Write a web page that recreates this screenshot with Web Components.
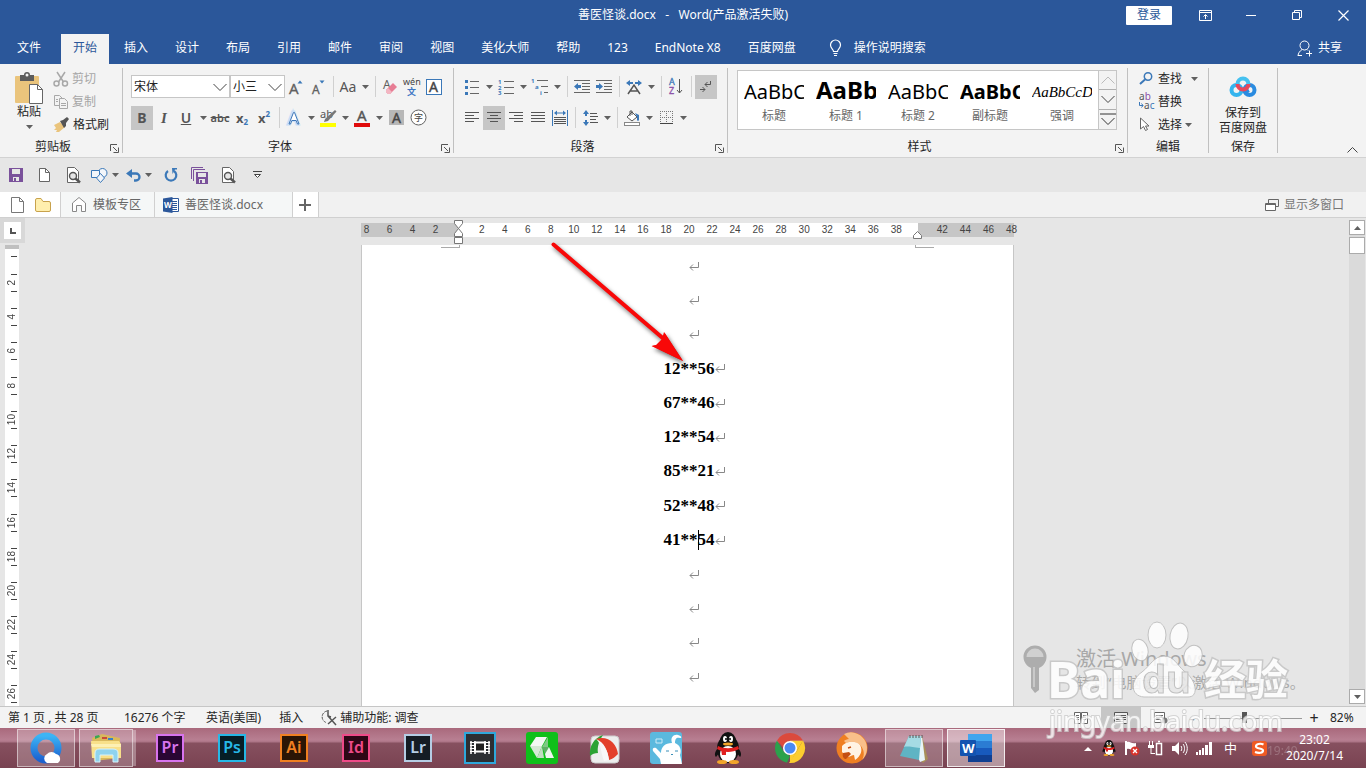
<!DOCTYPE html>
<html lang="zh-CN">
<head>
<meta charset="utf-8">
<title>善医怪谈.docx - Word</title>
<style>
  html, body {
    height: 100%;
    margin: 0;
  }

  body {
    font: 12px/16px "Noto Sans", "Noto Sans CJK SC", sans-serif;
    color: #262626;
    overflow: hidden;
  }
</style>
</head>
<body>
<word-app></word-app>

<script>
const BLUE = '#3b78b8';

// name: [width, height, markup]
const icons = {
  down: [7, 4, `<path d="M0 0h7L3.500 4z" fill="#606060"/>`],
  launcher: [9, 9, `<path d="M.5 7V.5H7M3 3l4 4M8.500 3.500v5h-5" fill="none" stroke="#555"/>`],
  chevron: [14, 8, `<path d="M.5 1 7 7.500 13.500 1" fill="none" stroke="#444"/>`],
  chevronUp: [14, 8, `<path d="M.5 7.500 7 1l6.500 6.500" fill="none" stroke="#bbb"/>`],
  chevronBar: [16, 13, `<path d="M0 1h16M1.500 5 8 11.500 14.500 5" fill="none" stroke="#333"/>`],
  collapse: [11, 6, `<path d="M.5 5.500l5-5 5 5" fill="none" stroke="#444"/>`],

  paste: [30, 32, `<rect x="1" y="4" width="24" height="27" rx="1" fill="#eac47c"/><path d="M6 3h4a3 3 0 0 1 6 0h4v6H6z" fill="#5c5c5c"/><circle cx="13" cy="3" r="1.500" fill="#f3f3f3"/><path d="M15.500 12.500h8l5 5v14h-13z" fill="#fff" stroke="#666"/><path d="M23.500 12.500v5h5" fill="none" stroke="#666"/>`],
  cut: [16, 16, `<g fill="none" stroke="#a8a8a8" stroke-width="1.500"><path d="M4 1l6.500 10M12 1 5.500 11"/><circle cx="3.500" cy="12.500" r="2.500"/><circle cx="12" cy="12.500" r="2.500"/></g>`],
  copy: [16, 16, `<g fill="#f3f3f3" stroke="#a8a8a8"><path d="M1.500 1.500h5l3 3v7h-8z"/><path d="M6.500 4.500h5l3 3v7h-8z"/><path d="M8 9.500h5M8 11.500h5M3 5.500h2M3 7.500h2" /></g>`],
  brush: [17, 15, `<path d="M1 8l6-3 5 5-6 5H3l1-2-3 0 2-2z" fill="#eac47c"/><path d="M7 4l3-1 4-3 2 2-3 4 0 3-2 2z" fill="#555"/>`],

  growFont: [16, 16, `<text x="1" y="15" font-size="15" fill="#606060" stroke="#606060" stroke-width=".3">A</text><path d="M9.500 4.500h5L12 1.500z" fill="${BLUE}"/>`],
  shrinkFont: [16, 16, `<text x="2" y="15" font-size="12" fill="#606060" stroke="#606060" stroke-width=".3">A</text><path d="M9.500 1.500h5L12 4.500z" fill="${BLUE}"/>`],
  clearFormat: [16, 16, `<text x="1" y="10" font-size="12" fill="#606060">A</text><path d="M4 11l7-7 4 4-7 7H6l-2-2z" fill="#e77d94"/><path d="M4 11l2-2 4 4-2 2H6l-2-2z" fill="#f3b6c2"/>`],
  pinyin: [18, 18, `<text x="0" y="7" font-size="9" fill="#444">wén</text><text x="4" y="17" font-size="9" font-weight="bold" fill="#3f76c4">文</text>`],
  charBorder: [16, 16, `<rect x=".5" y=".5" width="15" height="15" fill="#fff" stroke="${BLUE}"/><text x="3" y="13" font-size="14" fill="#444" stroke="#444" stroke-width=".4">A</text>`],
  textEffect: [16, 16, `<text x="2" y="14" font-size="16" fill="#b9d3f0" stroke="#c9def5" stroke-width="3">A</text><path d="M3 14 7.500 2.500h1L13 14h-1.500l-1.300-3.500H5.800L4.500 14z" fill="#fff" stroke="#3f76b8"/>`],
  highlight: [18, 18, `<text x="1" y="9" font-size="11" fill="#555">ab</text><path d="M16 1l1.500 1.500L9 12l-4 1 1-3z" fill="#777"/><rect x="1" y="14" width="16" height="4" fill="#ffff00"/>`],
  fontColor: [16, 18, `<text x="3" y="12" font-size="15" fill="#555" stroke="#555" stroke-width=".4">A</text><rect x="0" y="14" width="16" height="4" fill="#e00b0b"/>`],
  charShade: [15, 15, `<rect width="15" height="15" fill="#b7b7b7"/><text x="3" y="13" font-size="14" fill="#444" stroke="#444" stroke-width=".4">A</text>`],
  enclose: [17, 17, `<circle cx="8.500" cy="8.500" r="7.500" fill="#fff" stroke="#606060"/><text x="4" y="12" font-size="9" fill="#444">字</text>`],

  bullets: [14, 16, `<g fill="${BLUE}"><rect y="1" width="3" height="3"/><rect y="7" width="3" height="3"/><rect y="13" width="3" height="3"/></g><path d="M5 2.500h9M5 8.500h9M5 14.500h9" stroke="#666"/>`],
  numbers: [16, 16, `<g font-size="6" font-weight="bold" fill="${BLUE}"><text y="5">1</text><text y="11">2</text><text y="16">3</text></g><path d="M6 2.500h10M6 8.500h10M6 14.500h10" stroke="#666"/>`],
  multilevel: [18, 17, `<g font-size="6" font-weight="bold" fill="${BLUE}"><text y="5">1</text><text x="4" y="11">a</text><text x="9" y="17">i</text></g><path d="M6 2.500h11M10 8.500h7M13 14.500h4" stroke="#666"/>`],
  outdent: [16, 14, `<path d="M0 .5h16M8 3.500h8M8 6.500h8M8 9.500h8M0 12.500h16" stroke="#666"/><path d="M0 6.500 4 3v2h3v3H4v2z" fill="${BLUE}"/>`],
  indent: [16, 14, `<path d="M0 .5h16M8 3.500h8M8 6.500h8M8 9.500h8M0 12.500h16" stroke="#666"/><path d="M7 6.500 3 3v2H0v3h3v2z" fill="${BLUE}"/>`],
  asian: [16, 14, `<path d="M2 14 8 5l6 9M4.500 11h7" fill="none" stroke="#555" stroke-width="1.500"/><path d="M0 3l4-3v2h3v2H4v2zM16 3l-4-3v2H9v2h3v2z" fill="${BLUE}"/>`],
  sort: [14, 17, `<text x="0" y="7" font-size="9" fill="${BLUE}" stroke="${BLUE}" stroke-width=".3">A</text><text x="0" y="16" font-size="9" fill="#8b4fa8" stroke="#8b4fa8" stroke-width=".3">Z</text><path d="M10.500 1v14M8 12l2.500 3 2.500-3" fill="none" stroke="#555"/>`],
  marks: [14, 14, `<path d="M11.500 1v3.500H6M8.500 2 6 4.500 8.500 7M1 9.500h5M3.500 7 6 9.500 3.500 12" fill="none" stroke="#555"/>`],
  alignLeft: [14, 12, `<path d="M0 .5h14M0 3.500h9M0 6.500h14M0 9.500h9" stroke="#555"/>`],
  alignCenter: [14, 12, `<path d="M0 .5h14M3 3.500h8M0 6.500h14M3 9.500h8" stroke="#555"/>`],
  alignRight: [14, 12, `<path d="M0 .5h14M5 3.500h9M0 6.500h14M5 9.500h9" stroke="#555"/>`],
  justify: [14, 12, `<path d="M0 .5h14M0 3.500h14M0 6.500h14M0 9.500h14" stroke="#555"/>`],
  distribute: [16, 16, `<path d="M.5 0v16M15.500 0v16" stroke="${BLUE}"/><path d="M2 3l3-2.500v2h6v-2L14 3l-3 2.500v-2H5v2z" fill="${BLUE}"/><path d="M2 7.500h12M2 9.500h12M2 11.500h12M2 13.500h12" stroke="#555"/>`],
  lineSpacing: [15, 16, `<path d="M3 0 6 4H4v2H2V4H0zM3 16l3-4H4v-2H2v2H0z" fill="${BLUE}"/><path d="M7 3.500h7M7 6.500h8M7 9.500h6M7 12.500h8" stroke="#555"/>`],
  shading: [17, 16, `<path d="M3 7l5-5 5 5-5 4z" fill="#fff" stroke="#555"/><path d="M6 6V1h2v4" fill="none" stroke="#555"/><path d="M11 3l4 2v5c0 1-2 1-2 0V7z" fill="${BLUE}"/><rect x=".5" y="12.500" width="15" height="3" fill="#fff" stroke="#888"/>`],
  borders: [13, 13, `<path d="M.5 0v12M6.500 0v12M12.500 0v12M0 .5h13M0 6.500h13" stroke="#777" stroke-dasharray="1 1"/><path d="M0 12.500h13" stroke="#444"/>`],

  find: [14, 13, `<circle cx="9" cy="4.500" r="3.700" fill="none" stroke="${BLUE}" stroke-width="1.500"/><path d="M6 7.500 1 12" stroke="${BLUE}" stroke-width="2"/>`],
  replace: [16, 17, `<text y="7" font-size="10" fill="#555">a<tspan fill="#8b4fa8">b</tspan></text><text x="5" y="16" font-size="10" fill="#555">a<tspan fill="${BLUE}">c</tspan></text><path d="M.5 9v3.500H4M2.500 10.500l1.500 2-1.500 2" fill="none" stroke="${BLUE}"/>`],
  cursor: [11, 15, `<path d="M1.500 1v11l3-2.500 2 4 2-1-2-3.500H10z" fill="#fff" stroke="#666"/>`],
  netdisk: [28, 22, `<g fill="none" stroke-width="4"><circle cx="7.500" cy="15" r="5" stroke="#34b4ee"/><circle cx="20.500" cy="15" r="5" stroke="#2a8be0"/><path d="M16 12l3 6" stroke="#2a8be0"/><path d="M8.500 9a5.500 5.500 0 1 1 11 0" stroke="#45c1f0"/><path d="M8.500 9a5.500 5.500 0 0 0 11 0" stroke="#e8485c"/></g>`],

  bulb: [13, 18, `<path d="M4.500 12.500c0-2-3-3-3-6.500a5 5 0 0 1 10 0c0 3.500-3 4.500-3 6.500zM4.500 14.500h4M5 16.500h3" fill="none" stroke="#fff" stroke-width="1.200"/>`],
  share: [16, 17, `<g fill="none" stroke="#fff"><circle cx="7.500" cy="5.500" r="4.500"/><path d="M1 16c0-3 2-5 4-6.500M10 9.500l1 1M9 13.500h6M12.500 10.500v6M1 15.500h4"/></g>`],
  ribbonMode: [13, 11, `<path d="M.5.5h12v10H.5zM.5 2.500h12M6.500 9V5M4.500 6.500l2-2 2 2" fill="none" stroke="#fff"/>`],
  minimize: [10, 10, `<path d="M0 5.500h10" stroke="#fff"/>`],
  restore: [11, 11, `<path d="M.5 2.500h7v7h-7zM2.500 2V.5h7v7H8" fill="none" stroke="#fff"/>`],
  close: [11, 11, `<path d="M.5.5l10 10M10.500.5l-10 10" stroke="#fff" stroke-width="1.200"/>`],

  save: [14, 14, `<path d="M0 0h14v14H0z" fill="#7a519b"/><path d="M3 1h8v5H3z" fill="#e6e6e6"/><path d="M4 9h6v4H4z" fill="#e6e6e6"/><path d="M5 10h2v3H5z" fill="#7a519b"/>`],
  saveAll: [17, 17, `<path d="M.5 12V.5H12M2.500 14V2.500H14" fill="none" stroke="#7a519b"/><path d="M5 5h12v12H5z" fill="#7a519b"/><path d="M7 6h8v4H7zM8 12h6v4H8z" fill="#e6e6e6"/><path d="M9 13h2v3H9z" fill="#7a519b"/>`],
  newDoc: [11, 14, `<path d="M.5.5h6l4 4v9H.5z" fill="#fff" stroke="#666"/><path d="M6.500.5v4h4" fill="none" stroke="#666"/>`],
  preview: [15, 16, `<path d="M1.500.5h7l4 4v11h-11z" fill="#fff" stroke="#666"/><circle cx="7" cy="9" r="3.500" fill="#e6e6e6" stroke="#555" stroke-width="1.400"/><path d="M9.500 11.500 14 15.500" stroke="#555" stroke-width="2.500"/>`],
  shapes: [17, 15, `<g fill="#f3f6fa" stroke="${BLUE}"><circle cx="11.500" cy="5" r="4.500"/><path d="M.5 2.500h8v7h-8z"/><path d="M9.500 5.500l4 4.500-4 4.500L5.500 10z"/></g>`],
  undo: [15, 13, `<path d="M5 4.500h5a3.500 3.500 0 0 1 0 7H8" fill="none" stroke="${BLUE}" stroke-width="2.300"/><path d="M0 4.500 6 0v9z" fill="${BLUE}"/>`],
  redo: [14, 14, `<path d="M4 3a5.300 5.300 0 1 0 6 0" fill="none" stroke="${BLUE}" stroke-width="2.200"/><path d="M8 0h5v1.500h-2L8.500 6z" fill="${BLUE}"/>`],
  more: [9, 8, `<path d="M0 .5h9M1.500 3.500l3 3 3-3z" fill="#fff" stroke="#444"/>`],

  page: [13, 16, `<path d="M.5.5h8l4 4v11H.5z" fill="#fff" stroke="#777"/><path d="M8.500.5v4h4" fill="none" stroke="#777"/>`],
  folder: [16, 14, `<path d="M.5 2a1.500 1.500 0 0 1 1.500-1.500h4l2 3h6a1.500 1.500 0 0 1 1.500 1.500v7a1.500 1.500 0 0 1-1.500 1.500H2A1.500 1.500 0 0 1 .5 12z" fill="#ffefae" stroke="#c8a24c"/>`],
  home: [14, 15, `<path d="M.5 14.500V6L7 .5 13.500 6v8.500h-4v-6h-5v6z" fill="#fff" stroke="#888"/>`],
  wordDoc: [16, 16, `<path d="M8 1.500h7.500v13H8z" fill="#fff" stroke="#2b579a"/><path d="M9 4.500h5M9 6.500h5M9 8.500h5M9 10.500h5M9 12.500h5" stroke="#2b579a"/><path d="M0 1.500 9.500 0v16L0 14.500z" fill="#2b579a"/><text x="1" y="11" font-size="8" font-weight="bold" fill="#fff">W</text>`],
  plus: [12, 12, `<path d="M6 0v12M0 6h12" stroke="#666" stroke-width="2"/>`],
  windows: [14, 12, `<path d="M3.500 4V.5h10v7H11" fill="none" stroke="#666"/><path d="M.5 4.500h10v7H.5zM.5 5.500h10" fill="#fff" stroke="#666"/>`],
  tabStop: [6, 6, `<path d="M1 0v5h5" fill="none" stroke="#555" stroke-width="2"/>`],
  arrowUp: [7, 4, `<path d="M0 4h7L3.500 0z" fill="#606060"/>`],
  paraMark: [10, 9, `<path d="M9.500 0v5.500H1M4 2.500l-3 3 3 3" fill="none" stroke="#888"/>`],

  access: [16, 15, `<path d="M6 1a6 6 0 0 0-1 11.500" fill="none" stroke="#555" stroke-dasharray="3 1"/><path d="M7 0v6l3 1M7 6l8 9M15 7l-8 7" fill="none" stroke="#555" stroke-width="1.500"/>`],
  readMode: [14, 12, `<path d="M.5.500h6v11h-6zM7.500.5h6v11h-6z" fill="#fff" stroke="#666"/><path d="M2 3.500h3M2 5.500h3M2 7.500h3M9 3.500h3M9 5.500h3M9 7.500h3" stroke="#666"/>`],
  printMode: [14, 12, `<path d="M.5.5h13v11H.5z" fill="#eee" stroke="#555"/><path d="M2 3.500h10M2 5.500h10M2 7.500h10M2 9.500h7" stroke="#555"/>`],
  webMode: [14, 12, `<path d="M.5.5h10v10H.5z" fill="#fff" stroke="#666"/><path d="M2 3.500h7M2 5.500h6M2 7.500h5" stroke="#666"/><circle cx="10.500" cy="8.500" r="3" fill="#777"/>`],

  qqBrowser: [32, 32, `<defs><linearGradient id="g" x2="0" y2="1"><stop stop-color="#3cb4f5"/><stop offset="1" stop-color="#1c62d0"/></linearGradient></defs><circle cx="16" cy="16" r="12" fill="none" stroke="url(#g)" stroke-width="7"/><path d="M17 31a5 5 0 0 1 0-9 6 6 0 0 1 9 0 5 5 0 0 1 2 9z" fill="#fff"/>`],
  explorer: [32, 32, `<path d="M2 6l10-4 18 4v20L4 29z" fill="#d9b85c"/><path d="M5 4l4-1 1 2-5 2z" fill="#3aa655"/><path d="M12 5h5v2h-5z" fill="#c94a3c"/><path d="M18 6h5v2h-5z" fill="#3a82c9"/><path d="M1 9h28l2 3v14H2z" fill="#f8e08a"/><path d="M1 12h30v3H2z" fill="#fdf0b4"/><path d="M5 21c0-3 2-4 4-4h14c3 0 5 1 5 4v9h-5v-7H10v7H5z" fill="#8fd3ee" stroke="#d8f2fb"/>`],
  vegas: [32, 32, `<path d="M1 1h30v30H1z" fill="#2c2f33" stroke="#2fa8dc" stroke-width="2"/><path d="M7 9v13M11 9v13M21 9v13M25 9v13" stroke="#fff" stroke-width="1.500"/><path d="M6 10.500h6M6 13.500h6M6 16.500h6M6 19.500h6M20 10.500h6M20 13.500h6M20 16.500h6M20 19.500h6" stroke="#fff"/><path d="M11 10.500h10v9H11z" fill="#222" stroke="#fff" stroke-width="2"/>`],
  greenCube: [32, 32, `<rect width="32" height="32" rx="3" fill="#0fc01a"/><path d="M10 5h11l-5 9H4z" fill="#f4f8f4"/><path d="M4 14l12 0-5 12z" fill="#d6e8d6"/><path d="M16 14l2 12h-7z" fill="#c2dcc2"/><path d="M16 15l6-10v10z" fill="#7fc884"/><path d="M16 15h7l-4 7z" fill="#5fae66"/><path d="M23 15l5 11h-8l-1-4z" fill="#f0f6f0"/>`],
  umbrella: [32, 32, `<rect x="3" y="4" width="28" height="27" rx="4" fill="#eee" stroke="#ccc"/><path d="M2 24C1 14 6 6 15 3c-4 6-6 12-5 18-3 0-6 1-8 3z" fill="#2ba334"/><path d="M8 7c12-4 21 5 22 15-3 3-5 5-9 6C20 19 16 11 8 7z" fill="#e3402b"/><path d="M8 7c8 3 12 12 13 21l-5 1C12 19 14 12 8 7z" fill="#f8f8f8"/>`],
  mascot: [32, 32, `<rect width="32" height="32" rx="3" fill="#5bb9de"/><path d="M22 11c-2-6 2-9 6-8 4 1 4 3 2 3-3-1-5 0-5 5 5 2 7 7 5 12l2 9H11l-1-5-7-8c-1-3 1-4 3-3l5 5c0-6 4-10 11-10z" fill="#fff"/><path d="M16 19h3M25 19h3M21 22l1 1 1-1" fill="none" stroke="#3b8fb8"/><path d="M6 7h6v4H6z" fill="none" stroke="#cfeaf6"/>`],
  qq: [28, 32, `<ellipse cx="14" cy="17" rx="11" ry="14" fill="#111"/><ellipse cx="14" cy="9" rx="8" ry="9" fill="#111"/><path d="M4 16C1 19 0 23 2 25l4-5zM24 16c3 3 4 7 2 9l-4-5z" fill="#111"/><ellipse cx="14" cy="22" rx="8" ry="8" fill="#fff"/><ellipse cx="8" cy="30" rx="5" ry="2" fill="#f2a52a"/><ellipse cx="20" cy="30" rx="5" ry="2" fill="#f2a52a"/><path d="M4 14c6 3 14 3 20 0l1 3c-7 4-15 4-22 0z" fill="#e02020"/><path d="M7 17h5v6H8z" fill="#e02020"/><ellipse cx="11" cy="7" rx="2" ry="3" fill="#fff"/><ellipse cx="17" cy="7" rx="2" ry="3" fill="#fff"/><circle cx="12" cy="7" r="1"/><circle cx="16" cy="7" r="1"/><ellipse cx="14" cy="12" rx="5" ry="1.500" fill="#f2a52a"/>`],
  chrome: [30, 30, `<path d="M15 30l6.500-11.500L28 7.500H15z" fill="#fccd2f"/><path d="M28 7.500A15 15 0 0 1 14 30l7.500-11.500z" fill="#fccd2f"/><path d="M2 7.500 9 19l6 4-3 6.700A15 15 0 0 1 2 7.500z" fill="#2ba24c"/><path d="M2 7.500A15 15 0 0 1 28 7.500H15l-6 8z" fill="#db4a3d"/><circle cx="15" cy="15" r="7" fill="#fff"/><circle cx="15" cy="15" r="5.500" fill="#4a8af4"/>`],
  cheetah: [32, 32, `<circle cx="16" cy="16" r="15.500" fill="#ef7f22"/><path d="M8 2A16 16 0 0 1 26 28c3-5 2-10-1-14C21 9 15 9 10 11L8 9c1-1 3-2 5-2z" fill="#f9c08a"/><path d="M6 14c4-5 14-6 18-1 3 5 1 11-5 15l-1-5c-2 0-5 3-8 1l-4-4z" fill="#fff3e4"/><path d="M7 21l6-1 2 2-5 5c-2 0-4-2-3-6z" fill="#c44f12"/><path d="M12 16l3-1" stroke="#c44f12" stroke-width="1.500"/>`],
  notepad: [32, 32, `<path d="M24 4l6 23-5 4-3-4z" fill="#a88f58"/><path d="M11 4h13l3 24-5 2z" fill="#e8f5f8"/><path d="M11 4h12l-2 24-19-4z" fill="#5fb4c4"/><path d="M11 4h12l-1 12C14 15 9 14 6 15z" fill="#a6dbe4"/><path d="M12 3v3M15 3v3M18 3v3M21 3v3M24 3v3" stroke="#555"/>`],
  word: [34, 30, `<path d="M9 1h24v7H9z" fill="#41a5ee"/><path d="M9 8h24v7H9z" fill="#2b7cd3"/><path d="M9 15h24v7H9z" fill="#185abd"/><path d="M9 22h24v7H9z" fill="#103f91"/><rect x="1" y="7" width="16" height="16" rx="1" fill="#1353b0"/><text x="3" y="20" font-size="13" font-weight="bold" fill="#fff">W</text>`],

  trayUp: [8, 5, `<path d="M0 5h8L4 1z" fill="#fff"/>`],
  flag: [16, 16, `<path d="M2 1v14" stroke="#fff" stroke-width="2"/><path d="M3 2c3-1 4 2 9 1v7c-5 1-6-2-9-1z" fill="#fff"/><circle cx="11" cy="11" r="4.500" fill="#d8322a"/><path d="M9 9l4 4M13 9l-4 4" stroke="#fff" stroke-width="1.300"/>`],
  battery: [16, 16, `<path d="M8.500 3.500h5v11h-5zM10 1.500h2" fill="none" stroke="#fff" stroke-width="1.500"/><path d="M1.500 1v4M4.500 1v4M3 8v6M3 13.500h4" stroke="#fff"/><path d="M0 5h6v3H0z" fill="#fff"/>`],
  speaker: [15, 15, `<path d="M0 5h3l4-4v13l-4-4H0z" fill="#fff"/><path d="M9 5c1 1 1 4 0 5M11 3c2 2 2 7 0 9M13 1c3 4 3 9 0 13" fill="none" stroke="#fff"/>`],
  signal: [16, 13, `<path d="M0 10h2v3H0zM3 8h2v5H3zM6 6h2v7H6zM9 3h3v10H9zM13 0h3v13h-3z" fill="#fff"/>`],
  sogou: [15, 15, `<rect y="0" width="15" height="15" rx="3" fill="#f05a23"/><path d="M11.500 3.500C8 2 4 3 4 5.500s7 1.500 7 4-4 3-8 1.500" fill="none" stroke="#fff" stroke-width="2.200"/>`],

  redArrow: [150, 136, `<path d="M6.500 8.500 118 104" stroke="#f80808" stroke-width="4" stroke-linecap="round"/><path d="M136 125l-19-29-2 7-6 6-4 1z" fill="#f80808"/><path d="M136 125l-18.500-28.500-1.500 6.500-6 6-5.500 1z" fill="#f80808"/>`],
  key: [28, 50, `<circle cx="13" cy="12" r="10" fill="#d0d0d0" stroke="#adadad" stroke-width="3"/><path d="M3 12h20a10 10 0 0 1-6 9v24l-4 3-4-5V21a10 10 0 0 1-6-9z" fill="#adadad"/><path d="M12 22v20" stroke="#e5e5e5"/>`],
  paw: [72, 78, `<g fill="#fff" stroke="#bbb"><ellipse cx="27" cy="15" rx="9" ry="13"/><ellipse cx="49" cy="16" rx="9" ry="13" transform="rotate(10 49 16)"/><ellipse cx="10" cy="30" rx="8" ry="11" transform="rotate(-15 10 30)"/><ellipse cx="63" cy="36" rx="9" ry="11" transform="rotate(20 63 36)"/><path d="M34 36c10 0 13 9 20 15 12 8 16 26 4 26-12 0-32 0-44 0C0 76 0 60 12 52c8-6 12-16 22-16z"/></g><text x="12" y="73" font-size="38" font-weight="bold" fill="#e9e9e9" stroke="#bbb">du</text>`]
};

function define(name, html, setup) {
  const template = document.createElement('template');
  template.innerHTML = html;

  customElements.define(name, class extends HTMLElement {
    constructor() {
      super();
      this.attachShadow({ mode: 'open' });
      this.shadowRoot.append(template.content.cloneNode(true));
    }

    connectedCallback() {
      if(setup && !this._hasSetup) {
        this._hasSetup = true;
        setup(this, this.shadowRoot);
      }
    }
  });
}

define('ui-icon', `
  <style>
    :host { display: inline-block; flex: none; white-space: normal; }
    svg { display: block; overflow: visible; }
  </style>
`, (host, root) => {
  const [w, h, markup] = icons[host.getAttribute('name')];
  root.innerHTML += `<svg width="${w}" height="${h}" viewBox="0 0 ${w} ${h}" aria-hidden="true">${markup}</svg>`;
});

const buttonReset = `
  button {
    border: 0;
    padding: 0;
    background: none;
    font: inherit;
    color: inherit;
    display: flex;
    align-items: center;
    justify-content: center;
  }
`;

// Square ribbon button. "split" adds the menu arrow.
define('tool-button', `
  <style>
    ${buttonReset}
    :host { display: flex; height: 24px; color: #555; }
    .main { width: 22px; font-size: 14px; }
    .menu { width: 12px; }
    :host([pressed]) .main { background: #c6c6c6; }
  </style>
  <button class="main"><slot></slot></button>
`, (host, root) => {
  const icon = host.getAttribute('icon');
  const main = root.querySelector('.main');
  main.setAttribute('aria-label', host.getAttribute('label'));
  if(host.hasAttribute('pressed')) main.setAttribute('aria-pressed', 'true');
  if(icon) main.innerHTML = `<ui-icon name="${icon}"></ui-icon>`;
  if(host.hasAttribute('split')) {
    main.insertAdjacentHTML('afterend', `<button class="menu" aria-label="${host.getAttribute('label')}选项"><ui-icon name="down"></ui-icon></button>`);
  }
});

define('tool-divider', `
  <style>
    :host { display: block; width: 1px; height: 21px; margin: 0 3px 0 4px; background: #d0d0d0; }
  </style>
`);

define('font-select', `
  <style>
    :host { display: block; }
    label { display: grid; align-items: center; }
    select, ui-icon { grid-area: 1 / 1; }
    select {
      appearance: none;
      box-sizing: border-box;
      width: 100%;
      height: 23px;
      margin: 0;
      padding: 0 2px;
      border: 1px solid #c6c6c6;
      border-radius: 0;
      background: #fff;
      color: #222;
      font: inherit;
    }
    ui-icon { justify-self: end; margin-right: 3px; pointer-events: none; }
  </style>
  <label><select></select><ui-icon name="chevron"></ui-icon></label>
`, (host, root) => {
  const select = root.querySelector('select');
  select.setAttribute('aria-label', host.getAttribute('label'));
  select.add(new Option(host.getAttribute('value')));
});

define('ribbon-group', `
  <style>
    ${buttonReset}
    :host {
      display: grid;
      box-sizing: border-box;
      grid-template-rows: 69px 16px;
      margin: 4px 0;
      height: 85px;
      border-right: 1px solid #c0c0c0;
    }
    footer { display: flex; align-items: center; text-align: center; }
    span { flex: 1; padding-top: 4px; }
    button { width: 9px; margin: 6px 3px 0 4px; }
  </style>
  <slot></slot>
  <footer><span></span></footer>
`, (host, root) => {
  const footer = root.querySelector('footer');
  footer.firstElementChild.textContent = host.getAttribute('label');
  if(host.hasAttribute('launcher')) {
    footer.insertAdjacentHTML('beforeend', `<button aria-label="${host.getAttribute('label')}设置"><ui-icon name="launcher"></ui-icon></button>`);
  }
});

define('title-bar', `
  <style>
    ${buttonReset}
    :host {
      display: grid;
      grid-template-columns: 1fr auto 1fr;
      align-items: center;
      height: 34px;
      padding-bottom: 4px;
      box-sizing: border-box;
      background: #2b579a;
      color: #fff;
    }
    h1 { grid-column: 2; margin: 0; font: inherit; white-space: pre; }
    nav { justify-self: end; display: flex; align-items: center; }
    nav button { width: 46px; height: 30px; }
    nav .login {
      width: 46px;
      height: 19px;
      margin-right: 10px;
      border-radius: 1px;
      background: #fff;
      color: #2b579a;
    }
  </style>
  <h1>善医怪谈.docx   -   Word(产品激活失败)</h1>
  <nav>
    <button class="login">登录</button>
    <button aria-label="功能区显示选项"><ui-icon name="ribbonMode"></ui-icon></button>
    <button aria-label="最小化"><ui-icon name="minimize"></ui-icon></button>
    <button aria-label="还原"><ui-icon name="restore"></ui-icon></button>
    <button aria-label="关闭"><ui-icon name="close"></ui-icon></button>
  </nav>
`);

define('ribbon-tabs', `
  <style>
    ${buttonReset}
    :host { display: flex; height: 30px; padding-left: 5px; background: #2b579a; color: #fff; }
    button { height: 30px; padding: 0 12px 2px; margin-right: 3px; }
    button:first-of-type { margin-right: 8px; }
    button[aria-selected=true] { background: #f3f3f3; color: #2b579a; }
    .tell { gap: 12px; padding-left: 18px; }
    .share { gap: 5px; margin: 0 12px 0 auto; }
  </style>
`, (host, root) => {
  const tabs = ['文件', '开始', '插入', '设计', '布局', '引用', '邮件', '审阅', '视图', '美化大师', '帮助', '123', 'EndNote X8', '百度网盘'];
  root.innerHTML += tabs.map(tab => `<button role="tab" aria-selected="${tab === '开始'}">${tab}</button>`).join('') + `
    <button class="tell"><ui-icon name="bulb"></ui-icon>操作说明搜索</button>
    <button class="share"><ui-icon name="share"></ui-icon>共享</button>`;
});

define('clipboard-tools', `
  <style>
    ${buttonReset}
    :host { display: flex; align-items: flex-start; gap: 10px; padding-left: 15px; }
    .paste { flex-direction: column; width: 28px; padding-top: 4px; }
    .paste ui-icon:last-child { margin-top: 5px; }
    .list { margin-top: -1px; }
    .list button { height: 23px; gap: 3px; justify-content: flex-start; }
    .list button:disabled { color: #a6a6a6; }
  </style>
  <button class="paste"><ui-icon name="paste"></ui-icon>粘贴<ui-icon name="down"></ui-icon></button>
  <div class="list">
    <button disabled><ui-icon name="cut"></ui-icon>剪切</button>
    <button disabled><ui-icon name="copy"></ui-icon>复制</button>
    <button><ui-icon name="brush"></ui-icon>格式刷</button>
  </div>
`);

define('font-tools', `
  <style>
    :host { display: block; padding: 6px 7px 0 8px; }
    div { display: flex; align-items: center; height: 25px; margin-bottom: 6px; }
    .name { width: 99px; }
    .size { width: 55px; }
    b, u { font-size: 14px; }
    u { font-weight: 600; }
    i { font-family: "Liberation Serif", serif; font-weight: bold; font-size: 15px; }
    s { font-size: 11px; font-weight: 600; }
    sub, sup { font-size: 8px; line-height: 8px; color: #3b78b8; }
    .x { display: flex; font-size: 13px; font-weight: bold; }
    sub { align-self: flex-end; }
    sup { align-self: flex-start; }
  </style>
  <div>
    <font-select class="name" label="字体" value="宋体"></font-select>
    <font-select class="size" label="字号" value="小三"></font-select>
    <tool-button icon="growFont" label="增大字号"></tool-button>
    <tool-button icon="shrinkFont" label="减小字号"></tool-button>
    <tool-divider></tool-divider>
    <tool-button label="更改大小写" split>Aa</tool-button>
    <tool-divider></tool-divider>
    <tool-button icon="clearFormat" label="清除格式"></tool-button>
    <tool-button icon="pinyin" label="拼音指南"></tool-button>
    <tool-button icon="charBorder" label="字符边框"></tool-button>
  </div>
  <div>
    <tool-button label="加粗" pressed><b>B</b></tool-button>
    <tool-button label="倾斜"><i>I</i></tool-button>
    <tool-button label="下划线" split><u>U</u></tool-button>
    <tool-button label="删除线"><s>abc</s></tool-button>
    <tool-button label="下标"><span class="x">x<sub>2</sub></span></tool-button>
    <tool-button label="上标"><span class="x">x<sup>2</sup></span></tool-button>
    <tool-divider></tool-divider>
    <tool-button icon="textEffect" label="文本效果" split></tool-button>
    <tool-button icon="highlight" label="突出显示" split></tool-button>
    <tool-button icon="fontColor" label="字体颜色" split></tool-button>
    <tool-button icon="charShade" label="字符底纹"></tool-button>
    <tool-button icon="enclose" label="带圈字符"></tool-button>
  </div>
`);

define('paragraph-tools', `
  <style>
    :host { display: block; padding: 6px 6px 0 7px; }
    div { display: flex; align-items: center; height: 25px; margin-bottom: 6px; }
  </style>
  <div>
    <tool-button icon="bullets" label="项目符号" split></tool-button>
    <tool-button icon="numbers" label="编号" split></tool-button>
    <tool-button icon="multilevel" label="多级列表" split></tool-button>
    <tool-divider></tool-divider>
    <tool-button icon="outdent" label="减少缩进量"></tool-button>
    <tool-button icon="indent" label="增加缩进量"></tool-button>
    <tool-divider></tool-divider>
    <tool-button icon="asian" label="中文版式" split></tool-button>
    <tool-divider></tool-divider>
    <tool-button icon="sort" label="排序"></tool-button>
    <tool-divider></tool-divider>
    <tool-button icon="marks" label="显示编辑标记" pressed></tool-button>
  </div>
  <div>
    <tool-button icon="alignLeft" label="左对齐"></tool-button>
    <tool-button icon="alignCenter" label="居中" pressed></tool-button>
    <tool-button icon="alignRight" label="右对齐"></tool-button>
    <tool-button icon="justify" label="两端对齐"></tool-button>
    <tool-button icon="distribute" label="分散对齐"></tool-button>
    <tool-divider></tool-divider>
    <tool-button icon="lineSpacing" label="行距" split></tool-button>
    <tool-divider></tool-divider>
    <tool-button icon="shading" label="底纹" split></tool-button>
    <tool-button icon="borders" label="边框" split></tool-button>
  </div>
`);

define('style-gallery', `
  <style>
    ${buttonReset}
    :host { display: block; padding: 2px 10px 0 9px; }
    .box { display: flex; height: 58px; border: 1px solid #c6c6c6; background: #fff; }
    .style { flex-direction: column; width: 72px; color: #666; justify-content: flex-start; }
    .sample {
      width: 60px;
      height: 37px;
      line-height: 42px;
      overflow: hidden;
      text-align: left;
      white-space: nowrap;
      color: #000;
      font-size: 20px;
    }
    .strong { font-weight: bold; }
    .large { font-size: 24px; line-height: 38px; }
    .em { font: italic 15px/42px "Liberation Serif", serif; }
    .scroll { display: grid; grid-template-rows: 1fr 1fr 1fr; width: 17px; border-left: 1px solid #c6c6c6; }
    .scroll button { background: #f3f3f3; border-bottom: 1px solid #b0b0b0; }
    .scroll button:last-child { border-bottom: 0; }
  </style>
  <div class="box">
    <button class="style"><span class="sample">AaBbC</span>标题</button>
    <button class="style"><span class="sample strong large">AaBb</span>标题 1</button>
    <button class="style"><span class="sample">AaBbC</span>标题 2</button>
    <button class="style"><span class="sample strong">AaBbC</span>副标题</button>
    <button class="style"><span class="sample em">AaBbCcDd</span>强调</button>
    <div class="scroll">
      <button aria-label="上一行"><ui-icon name="chevronUp"></ui-icon></button>
      <button aria-label="下一行"><ui-icon name="chevron"></ui-icon></button>
      <button aria-label="其他"><ui-icon name="chevronBar"></ui-icon></button>
    </div>
  </div>
`);

define('edit-tools', `
  <style>
    ${buttonReset}
    :host { display: block; margin-top: -1px; padding-left: 11px; width: 69px; }
    button { height: 23px; }
    .icon { display: flex; width: 19px; }
    .find > ui-icon { margin-left: 9px; }
    .select > ui-icon { margin-left: 3px; }
  </style>
  <button class="find"><span class="icon"><ui-icon name="find"></ui-icon></span>查找<ui-icon name="down"></ui-icon></button>
  <button><span class="icon"><ui-icon name="replace"></ui-icon></span>替换</button>
  <button class="select"><span class="icon"><ui-icon name="cursor"></ui-icon></span>选择<ui-icon name="down"></ui-icon></button>
`);

define('save-tools', `
  <style>
    ${buttonReset}
    :host { display: block; width: 68px; }
    button { flex-direction: column; width: 100%; padding-top: 7px; line-height: 15px; }
    ui-icon { margin-bottom: 8px; }
  </style>
  <button><ui-icon name="netdisk"></ui-icon>保存到<br>百度网盘</button>
`);

define('ribbon-bar', `
  <style>
    ${buttonReset}
    :host { display: flex; height: 93px; background: #f3f3f3; border-bottom: 1px solid #d2d2d2; }
    .clipboard { width: 123px; }
    .font { width: 331px; }
    .paragraph { width: 274px; }
    .collapse { margin: auto 8px 4px auto; }
  </style>
  <ribbon-group class="clipboard" label="剪贴板" launcher><clipboard-tools></clipboard-tools></ribbon-group>
  <ribbon-group class="font" label="字体" launcher><font-tools></font-tools></ribbon-group>
  <ribbon-group class="paragraph" label="段落" launcher><paragraph-tools></paragraph-tools></ribbon-group>
  <ribbon-group label="样式" launcher><style-gallery></style-gallery></ribbon-group>
  <ribbon-group label="编辑"><edit-tools></edit-tools></ribbon-group>
  <ribbon-group label="保存"><save-tools></save-tools></ribbon-group>
  <button class="collapse" aria-label="折叠功能区"><ui-icon name="collapse"></ui-icon></button>
`);

define('quick-access', `
  <style>
    ${buttonReset}
    :host { display: flex; align-items: center; height: 34px; padding-left: 1px; background: #e6e6e6; }
    button { width: 29px; height: 24px; }
    .split { gap: 4px; width: 34px; }
  </style>
  <button aria-label="保存"><ui-icon name="save"></ui-icon></button>
  <button aria-label="新建"><ui-icon name="newDoc"></ui-icon></button>
  <button aria-label="打印预览"><ui-icon name="preview"></ui-icon></button>
  <button class="split" aria-label="形状"><ui-icon name="shapes"></ui-icon><ui-icon name="down"></ui-icon></button>
  <button class="split" aria-label="撤消"><ui-icon name="undo"></ui-icon><ui-icon name="down"></ui-icon></button>
  <button aria-label="重复"><ui-icon name="redo"></ui-icon></button>
  <button aria-label="全部保存"><ui-icon name="saveAll"></ui-icon></button>
  <button aria-label="预览"><ui-icon name="preview"></ui-icon></button>
  <button aria-label="自定义快速访问工具栏"><ui-icon name="more"></ui-icon></button>
`);

define('document-tabs', `
  <style>
    ${buttonReset}
    :host { display: flex; height: 25px; background: #f1f1f1; border-bottom: 1px solid #d0d0d0; color: #666; }
    button { border-right: 1px solid #d0d0d0; gap: 7px; }
    .files { display: flex; align-items: center; gap: 11px; padding: 0 9px 0 11px; background: #fff; border-right: 1px solid #d0d0d0; }
    .files button { border: 0; }
    .tab { padding: 0 13px 0 11px; background: #f5f7f7; }
    .current { padding: 0 29px 0 8px; gap: 6px; }
    .add { width: 26px; background: #fff; }
    .multi { margin-left: auto; padding-right: 22px; gap: 5px; border: 0; color: #777; }
  </style>
  <div class="files">
    <button aria-label="新建文档"><ui-icon name="page"></ui-icon></button>
    <button aria-label="打开"><ui-icon name="folder"></ui-icon></button>
  </div>
  <button class="tab"><ui-icon name="home"></ui-icon>模板专区</button>
  <button class="tab current"><ui-icon name="wordDoc"></ui-icon>善医怪谈.docx</button>
  <button class="add" aria-label="新建标签"><ui-icon name="plus"></ui-icon></button>
  <button class="multi"><ui-icon name="windows"></ui-icon>显示多窗口</button>
`);

// Horizontal ruler; one cell for every two characters, from -8 to 48.
define('page-ruler', `
  <style>
    :host { display: block; position: relative; width: 653px; height: 14px; }
    .band {
      height: 14px;
      background: linear-gradient(90deg, #c6c6c6 98px, #fff 98px 557px, #c6c6c6 557px);
    }
    .cells {
      display: grid;
      grid-template-columns: repeat(29, 1fr);
      margin: 0 -9px 0 -6px;
      text-align: center;
      font: 10px/14px "Liberation Sans", sans-serif;
      color: #444;
    }
    svg { position: absolute; top: -3px; overflow: visible; fill: #fff; stroke: #777; }
    .left { left: 92px; }
    .right { left: 551px; }
  </style>
  <div class="band"><div class="cells"></div></div>
  <svg class="left" width="11" height="25"><path d="M1.500.5h8v3l-4 5-4-5zM5.500 8.500l4 5v3h-8v-3zM1.500 17.500h8v6h-8z"/></svg>
  <svg class="right" width="11" height="25"><path d="M5.500 11.500l4 4v3h-8v-3z"/></svg>
`, (host, root) => {
  const cells = root.querySelector('.cells');
  for(let n = -8; n <= 48; n += 2) {
    cells.append(Object.assign(document.createElement('span'), {
      textContent: n === 0 || n === 40 ? '' : Math.abs(n)
    }));
  }
});

define('side-ruler', `
  <style>
    ${buttonReset}
    :host { display: flex; flex-direction: column; align-items: flex-start; width: 26px; overflow: hidden; }
    .stop { flex: none; width: 17px; height: 17px; border: 4px solid #d8d8d8; box-sizing: content-box; background: #fff; }
    .bar { width: 14px; margin: 2px 0 0 5px; border-top: 4px solid #c0c0c0; background: #fff; padding-top: 16px; }
    .unit {
      box-sizing: border-box;
      display: flex;
      align-items: center;
      justify-content: center;
      height: 18px;
      margin-bottom: 16px;
      width: 14px;
      background:
        linear-gradient(#444, #444) 6px 0 / 6px 1px no-repeat,
        linear-gradient(#444, #444) 6px 100% / 6px 1px no-repeat;
      font: 10px/14px "Liberation Sans", sans-serif;
      color: #444;
    }
    .unit:nth-child(4n) { margin-bottom: 17px; }
    .first { height: 1px; background-size: 6px 1px; margin: -9px 0 17px; }
    .unit span { writing-mode: vertical-rl; transform: rotate(180deg); }
  </style>
  <button class="stop" aria-label="制表符"><ui-icon name="tabStop"></ui-icon></button>
  <div class="bar"></div>
`, (host, root) => {
  let html = '<div class="unit first"></div>';
  for(let n = 2; n <= 26; n += 2) html += `<div class="unit"><span>${n}</span></div>`;
  root.querySelector('.bar').innerHTML = html;
});

define('page-view', `
  <style>
    :host {
      display: block;
      position: relative;
      flex: 1;
      width: 651px;
      box-sizing: content-box;
      min-height: 0;
      padding-top: 4px;
      border: solid #c6c6c6;
      border-width: 0 1px;
      background: #fff;
      overflow: hidden;
    }
    p {
      display: flex;
      align-items: center;
      justify-content: center;
      height: 34px;
      margin: 0 0 0 13px;
      color: #000;
      font: bold 17px/34px "Liberation Serif", "Noto Sans CJK SC", serif;
    }
    p:nth-of-type(4n) { height: 35px; }
    .caret { width: 1px; height: 20px; margin-right: -1px; background: #000; }
    .crop { position: absolute; top: 0; width: 18px; height: 2px; border-bottom: 1px solid #aaa; }
    .start { left: 79px; border-right: 1px solid #aaa; }
    .end { right: 79px; border-left: 1px solid #aaa; }
  </style>
  <span class="crop start"></span>
  <span class="crop end"></span>
`, (host, root) => {
  const lines = ['', '', '', '12**56', '67**46', '12**54', '85**21', '52**48', '41**|54', '', '', '', ''];
  root.innerHTML += lines.map(line => `<p>${line.replace('|', '<span class="caret"></span>')}<ui-icon name="paraMark"></ui-icon></p>`).join('');
});

define('scroll-bar', `
  <style>
    ${buttonReset}
    :host { display: flex; flex-direction: column; width: 16px; margin: 2px 1px 2px 0; background: #dadada; }
    button, .thumb { box-sizing: border-box; height: 15px; border: 1px solid #ababab; background: #fff; }
    .thumb { height: 17px; margin: 2px 0 auto; }
  </style>
  <button aria-label="向上滚动"><ui-icon name="arrowUp"></ui-icon></button>
  <div class="thumb"></div>
  <button aria-label="向下滚动"><ui-icon name="down"></ui-icon></button>
`);

define('word-workspace', `
  <style>
    :host { display: flex; position: relative; background: #e6e6e6; }
    main { flex: 1; display: flex; flex-direction: column; align-items: center; min-width: 0; }
    page-ruler { margin: 5px 0 8px; }
    /* annotation over the page */
    .arrow { position: absolute; left: calc(50% - 136px); top: 18px; filter: drop-shadow(2px 3px 2px #0008); }
  </style>
  <side-ruler></side-ruler>
  <main>
    <page-ruler></page-ruler>
    <page-view></page-view>
  </main>
  <scroll-bar></scroll-bar>
  <ui-icon class="arrow" name="redArrow"></ui-icon>
`);

define('status-bar', `
  <style>
    ${buttonReset}
    :host { display: flex; align-items: center; height: 21px; padding-left: 8px; background: #f3f3f3; border-top: 1px solid #c6c6c6; }
    .info { gap: 3px; margin-right: 18px; white-space: pre; justify-content: flex-start; }
    .pages { min-width: 98px; }
    .words { min-width: 64px; }
    .views { display: flex; margin-left: auto; }
    .views button { width: 40px; height: 21px; }
    .views .on { background: #c6c6c6; }
    .zoom { display: flex; align-items: center; gap: 6px; width: 180px; margin-left: 5px; }
    input { appearance: none; flex: 1; min-width: 0; height: 16px; margin: 0; background: linear-gradient(#999, #999) 0 8px / 100% 1px no-repeat; }
    input::-webkit-slider-thumb { appearance: none; width: 5px; height: 11px; background: #555; }
    .zoom button { font-size: 16px; width: 12px; }
    output { width: 36px; padding-left: 4px; }
  </style>
  <button class="info pages">第 1 页 , 共 28 页</button>
  <button class="info words">16276 个字</button>
  <button class="info">英语(美国)</button>
  <button class="info">插入</button>
  <button class="info"><ui-icon name="access"></ui-icon>辅助功能: 调查</button>
  <div class="views">
    <button aria-label="阅读视图"><ui-icon name="readMode"></ui-icon></button>
    <button class="on" aria-label="页面视图"><ui-icon name="printMode"></ui-icon></button>
    <button aria-label="Web 版式视图"><ui-icon name="webMode"></ui-icon></button>
  </div>
  <div class="zoom">
    <button aria-label="缩小">-</button>
    <input type="range" aria-label="显示比例" min="0" max="100" value="41">
    <button aria-label="放大">+</button>
    <output>82%</output>
  </div>
`);

define('adobe-tile', `
  <style>
    :host {
      display: block;
      box-sizing: border-box;
      width: 28px;
      height: 28px;
      border: 2px solid var(--edge);
      background: var(--fill);
      color: var(--edge);
      font: 600 16px/22px "Noto Sans", sans-serif;
      text-align: center;
    }
  </style>
  <slot></slot>
`);

define('task-bar', `
  <style>
    ${buttonReset}
    :host {
      display: flex;
      align-items: center;
      height: 40px;
      padding-left: 17px;
      background: linear-gradient(#a9697c, #b87f92 12px, #ab7385 14px, #86505f 15px, #7f4857 30px, #784351);
      color: #fff;
    }
    .app { box-sizing: border-box; width: 58px; height: 38px; margin-right: 4px; border: 1px solid transparent; }
    .open { border-color: #ffffff80; background: #ffffff38; }
    .stack { box-shadow: 4px 0 0 -1px #ffffff50; width: 54px; margin-right: 8px; }
    .current { border-color: #fffc; background: #ffffff70; }
    .tray { display: flex; align-items: center; margin-left: auto; gap: 8px; }
    .tray ui-icon { min-width: 16px; }
    .tray .up { min-width: 8px; margin-right: 2px; }
    .qq { zoom: .5; }
    .ime { width: 16px; margin: 0 4px; font-size: 13px; }
    time { margin: 0 23px 0 10px; text-align: center; line-height: 16px; }
  </style>
  <button class="app open" aria-label="QQ浏览器"><ui-icon name="qqBrowser"></ui-icon></button>
  <button class="app open stack" aria-label="资源管理器"><ui-icon name="explorer"></ui-icon></button>
  <button class="app"><adobe-tile style="--edge: #d873ee; --fill: #2a0634">Pr</adobe-tile></button>
  <button class="app"><adobe-tile style="--edge: #26b8e6; --fill: #061e26">Ps</adobe-tile></button>
  <button class="app"><adobe-tile style="--edge: #f08021; --fill: #2b1505">Ai</adobe-tile></button>
  <button class="app"><adobe-tile style="--edge: #ee4a88; --fill: #2e0716">Id</adobe-tile></button>
  <button class="app"><adobe-tile style="--edge: #b5cde4; --fill: #141c24">Lr</adobe-tile></button>
  <button class="app" aria-label="Vegas"><ui-icon name="vegas"></ui-icon></button>
  <button class="app" aria-label="Camtasia"><ui-icon name="greenCube"></ui-icon></button>
  <button class="app" aria-label="FastStone"><ui-icon name="umbrella"></ui-icon></button>
  <button class="app" aria-label="助手"><ui-icon name="mascot"></ui-icon></button>
  <button class="app" aria-label="QQ"><ui-icon name="qq"></ui-icon></button>
  <button class="app" aria-label="Chrome"><ui-icon name="chrome"></ui-icon></button>
  <button class="app" aria-label="猎豹浏览器"><ui-icon name="cheetah"></ui-icon></button>
  <button class="app open" aria-label="记事本"><ui-icon name="notepad"></ui-icon></button>
  <button class="app open current" aria-label="Word"><ui-icon name="word"></ui-icon></button>
  <div class="tray">
    <ui-icon class="up" name="trayUp"></ui-icon>
    <ui-icon class="qq" name="qq"></ui-icon>
    <ui-icon name="flag"></ui-icon>
    <ui-icon name="battery"></ui-icon>
    <ui-icon name="speaker"></ui-icon>
    <ui-icon name="signal"></ui-icon>
    <span class="ime">中</span>
    <ui-icon name="sogou"></ui-icon>
    <time>23:02<br>2020/7/14</time>
  </div>
`);

// Activation notice and site mark, both float over the window's corner.
define('screen-marks', `
  <style>
    :host { display: block; position: absolute; right: 0; bottom: 0; width: 346px; height: 150px; pointer-events: none; }
    div, ui-icon { position: absolute; white-space: nowrap; }
    .key { left: 2px; top: 27px; }
    .title { left: 56px; top: 28px; font-size: 20px; line-height: 26px; color: #a8a8a8; }
    .hint { left: 56px; top: 54px; font-size: 15px; line-height: 20px; color: #a8a8a8; }
    .mark { color: #fff; opacity: .85; font-weight: bold; -webkit-text-stroke: 3px #c4c4c4; paint-order: stroke; }
    .bai { left: 27px; top: 36px; font-size: 50px; line-height: 50px; }
    .paw { left: 110px; top: 2px; opacity: .85; }
    .cjk { left: 184px; top: 36px; font-size: 42px; line-height: 50px; }
    .url { left: 29px; top: 88px; font-size: 27px; line-height: 30px; color: #fff; opacity: .8; -webkit-text-stroke: 2px #ccc; paint-order: stroke; }
    .ghost { color: #fff; opacity: .2; }
    .time { left: 247px; top: 125px; }
    .scale { left: 310px; top: 104px; }
  </style>
  <ui-icon class="key" name="key"></ui-icon>
  <div class="title">激活 Windows</div>
  <div class="hint">转到“电脑设置”以激活 Windows。</div>
  <div class="mark bai">Bai</div>
  <ui-icon class="paw" name="paw"></ui-icon>
  <div class="mark cjk">经验</div>
  <div class="url">jingyan.baidu.com</div>
  <div class="ghost time">19:49</div>
`);

define('word-app', `
  <style>
    :host { display: flex; flex-direction: column; position: relative; height: 100vh; overflow: hidden; }
    word-workspace { flex: 1; min-height: 0; }
  </style>
  <title-bar></title-bar>
  <ribbon-tabs></ribbon-tabs>
  <ribbon-bar></ribbon-bar>
  <quick-access></quick-access>
  <document-tabs></document-tabs>
  <word-workspace></word-workspace>
  <status-bar></status-bar>
  <task-bar></task-bar>
  <screen-marks></screen-marks>
`);
</script>
</body>
</html>
